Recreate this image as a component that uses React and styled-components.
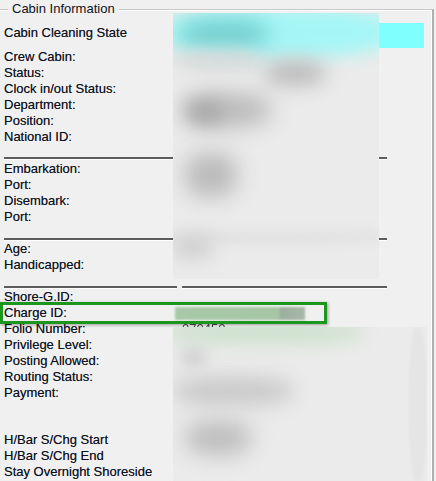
import styled, { createGlobalStyle, css } from "styled-components";

const GlobalStyle = createGlobalStyle`
  html, body {
    margin: 0;
    padding: 0;
    background: #f0f0f0;
  }
  body {
    width: 436px;
    height: 481px;
    overflow: hidden;
    font-family: "Liberation Sans", Arial, sans-serif;
    font-size: 13px;
    color: #0e1220;
  }
`;

const firstRows = [
  "Crew Cabin:",
  "Status:",
  "Clock in/out Status:",
  "Department:",
  "Position:",
  "National ID:",
];

const travelRows = ["Embarkation:", "Port:", "Disembark:", "Port:"];

const personRows = ["Age:", "Handicapped:"];

const chargeRows = [
  "Privilege Level:",
  "Posting Allowed:",
  "Routing Status:",
  "Payment:",
];

const surchargeRows = [
  "H/Bar S/Chg Start",
  "H/Bar S/Chg End",
  "Stay Overnight Shoreside",
];

// blurred-out value areas of the original dialog
const topBlobs = [
  { x: -10, y: -6, w: 230, h: 50, c: "#a4f6f6", b: 9 },
  { x: 6, y: 6, w: 90, h: 30, c: "#78d0d0", b: 10 },
  { x: 0, y: 38, w: 90, h: 18, c: "#d8d8d8", b: 8 },
  { x: 92, y: 48, w: 60, h: 24, c: "#b9b9b9", b: 10 },
  { x: 8, y: 80, w: 90, h: 34, c: "#bbbbbb", b: 11 },
  { x: 16, y: 88, w: 34, h: 22, c: "#a8a8a8", b: 9 },
  { x: 12, y: 140, w: 52, h: 44, c: "#bababa", b: 11 },
  { x: -10, y: 218, w: 230, h: 12, c: "#e0e0e0", b: 6 },
  { x: 0, y: 222, w: 40, h: 24, c: "#d0d0d0", b: 9 },
];

const bottomBlobs = [
  { x: -10, y: -10, w: 200, h: 28, c: "#cfe2cf", b: 9 },
  { x: 8, y: 20, w: 26, h: 20, c: "#d2d2d2", b: 7 },
  { x: 0, y: 50, w: 120, h: 28, c: "#c9c9c9", b: 10 },
  { x: 12, y: 94, w: 66, h: 34, c: "#bdbdbd", b: 11 },
  { x: 236, y: 0, w: 18, h: 154, c: "#e5e5e5", b: 1 },
];

export default function App() {
  return (
    <Screen>
      <GlobalStyle />
      <GroupBox>
        <Legend>Cabin Information</Legend>

        <CleaningRow>
          <Label>Cabin Cleaning State</Label>
          <StateBar />
        </CleaningRow>

        <Section $top={1}>
          {firstRows.map((label) => (
            <Row key={label}>
              <Label>{label}</Label>
            </Row>
          ))}
        </Section>

        <Separator $top={12} $bottom={1} />

        <Section>
          {travelRows.map((label, i) => (
            <Row key={`${label}${i}`}>
              <Label>{label}</Label>
            </Row>
          ))}
        </Section>

        <Separator $top={13} $bottom={0} />

        <Section>
          {personRows.map((label) => (
            <Row key={label}>
              <Label>{label}</Label>
            </Row>
          ))}
        </Section>

        <SplitSeparator>
          <Separator $top={0} $bottom={0} />
          <Separator $top={0} $bottom={0} />
        </SplitSeparator>

        <Section>
          <Row>
            <Label>Shore-G.ID:</Label>
          </Row>
          <Row $highlight>
            <Label>Charge ID:</Label>
            <Smudge />
          </Row>
          <Row>
            <Label>Folio Number:</Label>
            <FolioValue>070450</FolioValue>
          </Row>
          {chargeRows.map((label) => (
            <Row key={label}>
              <Label>{label}</Label>
            </Row>
          ))}
        </Section>

        <Section $top={31}>
          {surchargeRows.map((label) => (
            <Row key={label}>
              <Label>{label}</Label>
            </Row>
          ))}
        </Section>
      </GroupBox>

      <Redaction $left={173} $top={13} $w={206} $h={266}>
        {topBlobs.map((b, i) => (
          <Blob key={i} $x={b.x} $y={b.y} $w={b.w} $h={b.h} $c={b.c} $b={b.b} />
        ))}
      </Redaction>

      <Redaction $left={173} $top={327} $w={254} $h={154}>
        {bottomBlobs.map((b, i) => (
          <Blob key={i} $x={b.x} $y={b.y} $w={b.w} $h={b.h} $c={b.c} $b={b.b} />
        ))}
      </Redaction>
    </Screen>
  );
}

const Screen = styled.div`
  position: relative;
  width: 436px;
  height: 481px;
  overflow: hidden;
`;

const GroupBox = styled.div`
  position: relative;
  box-sizing: border-box;
  width: 434px;
  height: 480px;
  margin-top: 9px;
  padding: 15px 0 0 4px;
  border-top: 1px solid #c8c8c8;
  border-right: 2px solid #b0b0b0;
  box-shadow: inset 0 1px 0 #ffffff, inset -1px 0 0 #ffffff;
`;

const Legend = styled.span`
  position: absolute;
  top: -9px;
  left: 8px;
  padding: 0 4px;
  line-height: 16px;
  background: #f0f0f0;
`;

const CleaningRow = styled.div`
  display: grid;
  grid-template-columns: 176px 244px;
  align-items: start;
  height: 23px;
  line-height: 16px;
`;

const StateBar = styled.div`
  height: 25px;
  margin-top: -2px;
  background: #80ffff;
`;

const Section = styled.div`
  margin-top: ${(p) => p.$top || 0}px;
`;

const Row = styled.div`
  position: relative;
  display: grid;
  grid-template-columns: 169px 1fr;
  height: 16px;
  line-height: 16px;

  ${(p) =>
    p.$highlight &&
    css`
      &::after {
        content: "";
        position: absolute;
        left: -4px;
        top: -3px;
        width: 321px;
        height: 16px;
        border: 3px solid #1c961c;
        box-shadow: 1px 1px 3px rgba(0, 0, 0, 0.35);
      }
    `}
`;

const Label = styled.span`
  white-space: nowrap;
  text-shadow: 0 0 0.6px rgba(10, 16, 40, 0.6);
`;

const Smudge = styled.div`
  width: 130px;
  height: 13px;
  margin: 2px 0 0 2px;
  background: linear-gradient(
    90deg,
    #a8c9a8 0%,
    #a6c6a6 80%,
    #9caf9c 81%,
    #a8b8a8 100%
  );
  filter: blur(0.8px);
`;

const FolioValue = styled.span`
  padding-left: 9px;
  color: #3a3a3a;
  filter: blur(0.6px);
`;

const Separator = styled.div`
  box-sizing: border-box;
  width: 383px;
  height: 3px;
  margin: ${(p) => p.$top}px 0 ${(p) => p.$bottom}px;
  border-top: 2px solid #5c5c5c;
  border-bottom: 1px solid #ffffff;
`;

const SplitSeparator = styled.div`
  display: grid;
  grid-template-columns: 173px 205px;
  gap: 5px;
  width: 383px;
  margin: 13px 0 0;

  & > div {
    width: auto;
  }
`;

const Redaction = styled.div`
  position: absolute;
  left: ${(p) => p.$left}px;
  top: ${(p) => p.$top}px;
  width: ${(p) => p.$w}px;
  height: ${(p) => p.$h}px;
  overflow: hidden;
  background: #ebebeb;
`;

const Blob = styled.div`
  position: absolute;
  left: ${(p) => p.$x}px;
  top: ${(p) => p.$y}px;
  width: ${(p) => p.$w}px;
  height: ${(p) => p.$h}px;
  border-radius: 40%;
  background: ${(p) => p.$c};
  filter: blur(${(p) => p.$b}px);
`;
